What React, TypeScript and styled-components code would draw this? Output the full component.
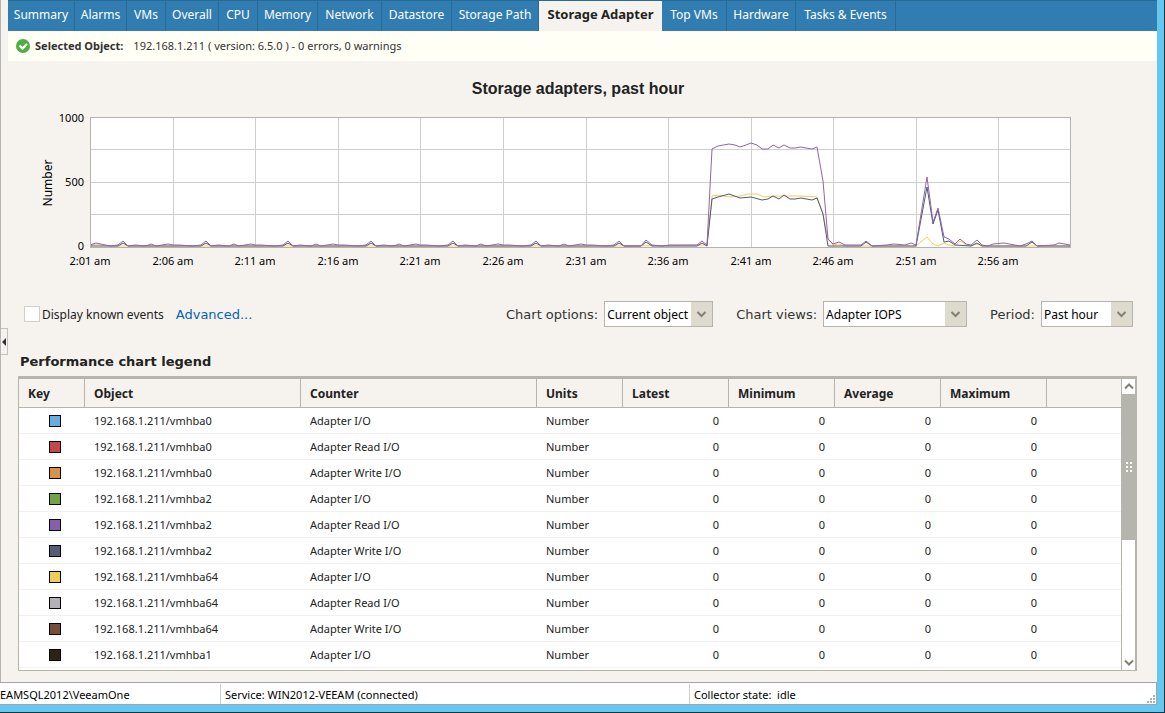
import React from "react";
import styled, { createGlobalStyle } from "styled-components";

const ui = `"Noto Sans", "Open Sans", sans-serif`;
const wide = `"DejaVu Sans", sans-serif`;
const line = "#b5b5ad";

const GlobalStyle = createGlobalStyle`
  * { box-sizing: border-box; }
  body { margin: 0; background: #63c9f0; font-family: ${ui}; font-size: 12px; color: #222; }
`;

const Frame = styled.div`
  min-height: 100vh;
  display: flex;
  flex-direction: column;
  border-right: 1px solid #1d3440;
  border-bottom: 1px solid #1d3440;
  background: #63c9f0;
  padding: 0 7px 7px 0;
`;
const Body = styled.div`
  flex: 1;
  display: flex;
  background: #f6f3ee;
`;
const Gutter = styled.div`
  width: 8px;
  flex: none;
  border-left: 1px solid #b4b4b4;
  padding-top: 328px;
`;
const Collapse = styled.button`
  display: flex;
  align-items: center;
  justify-content: center;
  width: 7px;
  height: 27px;
  padding: 0;
  border: 1px solid #c4c1bb;
  border-left: 0;
  background: #f6f3ee;
`;
const Main = styled.main`
  flex: 1;
  min-width: 0;
  display: flex;
  flex-direction: column;
`;

const Tabs = styled.nav`
  display: flex;
  height: 31px;
  background: #317db1;
  border-top: 1px solid #276a94;
`;
const Tab = styled.a<{ $active?: boolean; $w: number }>`
  flex: 0 0 ${(p) => p.$w}px;
  text-align: center;
  line-height: 27px;
  white-space: nowrap;
  text-decoration: none;
  font-size: ${(p) => (p.$active ? 13 : 12)}px;
  font-weight: ${(p) => (p.$active ? 700 : 400)};
  color: ${(p) => (p.$active ? "#222" : "#fff")};
  background: ${(p) => (p.$active ? "#f6f3ee" : "transparent")};
  border-right: ${(p) => (p.$active ? "0" : "1px solid #276a94")};
`;

const Status = styled.div`
  display: flex;
  align-items: center;
  height: 30px;
  padding: 0 0 1px 7px;
  background: #fffff6;
  font-size: 11px;
  line-height: 14px;
  color: #333;
  svg { margin-right: 4px; }
  strong { margin-right: 10px; }
`;

const ChartTitle = styled.h1`
  margin: 18px 9px 0 0;
  text-align: center;
  font: 700 16px/20px "Liberation Sans", Arial, sans-serif;
  color: #222;
`;
const Chart = styled.svg`
  display: block;
  width: 100%;
  height: auto;
  text { font-family: ${ui}; font-size: 11px; fill: #000; }
  text.axis { font-size: 12px; }
`;

const Controls = styled.div`
  display: flex;
  align-items: center;
  padding: 0 24px 0 16px;
  height: 26px;
  margin-top: 22px;
`;
const Check = styled.label`
  display: flex;
  align-items: center;
  gap: 2px;
  white-space: nowrap;
  input {
    appearance: none;
    width: 16px;
    height: 16px;
    margin: 0;
    background: #fff;
    border: 1px solid #d2d0cc;
  }
`;
const Advanced = styled.a`
  margin-left: 12px;
  margin-right: auto;
  font-family: ${wide};
  font-size: 13px;
  color: #0066b3;
  text-decoration: none;
`;
const Picker = styled.label`
  display: flex;
  align-items: center;
  gap: 6px;
  margin-left: 23px;
  font-family: ${wide};
  font-size: 13px;
  color: #333;
  white-space: nowrap;
`;
const SelectBox = styled.span<{ $w: number }>`
  display: flex;
  position: relative;
  width: ${(p) => p.$w}px;
  height: 26px;
  svg { position: absolute; right: 1px; top: 1px; pointer-events: none; }
`;
const Select = styled.select`
  appearance: none;
  width: 100%;
  padding: 0 0 0 2px;
  border: 1px solid ${line};
  border-radius: 0;
  background: #fff;
  color: #000;
  font-family: ${ui};
  font-size: 12px;
`;

const LegendTitle = styled.h2`
  margin: 25px 0 4px 12px;
  font: 700 13px/20px ${wide};
  color: #222;
`;
const Legend = styled.div`
  display: flex;
  margin: 0 20px 11px 10px;
  border: 1px solid ${line};
  border-top-width: 3px;
  border-right-width: 2px;
  background: #fff;
`;
const TableView = styled.div`
  flex: 1;
  padding-bottom: 2px;
  min-width: 0;
`;
const Table = styled.table`
  width: 100%;
  table-layout: fixed;
  border-collapse: separate;
  border-spacing: 0;
  font-size: 11px;
`;
const Th = styled.th`
  height: 29px;
  padding: 2px 0 0 9px;
  text-align: left;
  font: 700 12px/16px ${ui};
  background: #f6f3ee;
  border-bottom: 1px solid ${line};
  border-right: 1px solid ${line};
  &:last-child { border-right: 0; }
`;
const Td = styled.td<{ $num?: boolean }>`
  height: 26px;
  padding: 0 10px 0 9px;
  line-height: 16px;
  text-align: ${(p) => (p.$num ? "right" : "left")};
  white-space: nowrap;
  border-bottom: 1px solid #f1f1f1;
`;
const Swatch = styled.span<{ $color: string }>`
  display: block;
  width: 12px;
  height: 12px;
  margin-left: 21px;
  border: 1px solid #000;
  background: ${(p) => p.$color};
`;
const Scroll = styled.div`
  width: 14px;
  flex: none;
  display: flex;
  flex-direction: column;
  justify-content: space-between;
  border-left: 1px solid ${line};
  svg { display: block; }
`;
const ScrollButton = styled.button`
  display: flex;
  align-items: center;
  justify-content: center;
  height: 15px;
  padding: 0;
  border: 0;
  background: #fff;
`;
const Thumb = styled.div`
  height: 146px;
  margin-bottom: auto;
  display: flex;
  align-items: center;
  justify-content: center;
  background: ${line};
`;

const StatusBar = styled.footer`
  position: relative;
  display: flex;
  height: 23px;
  background: #fff;
  border: 1px solid #a5a3a8;
  border-left: 0;
  line-height: 22px;
  font-size: 11px;
  color: #000;
  overflow: hidden;
  white-space: pre;
`;
const StatusCell = styled.div<{ $w?: number }>`
  flex: ${(p) => (p.$w ? `0 0 ${p.$w}px` : "1")};
  padding-left: 4px;
  margin-top: 1px;
  & + & { border-left: 1px solid #d0d0d0; }
  &:first-child { padding-left: 0; }
`;
const Grip = styled.svg`
  position: absolute;
  right: 1px;
  bottom: 1px;
`;

const tabs: [string, number][] = [
  ["Summary", 67], ["Alarms", 52], ["VMs", 39], ["Overall", 53], ["CPU", 39], ["Memory", 60],
  ["Network", 64], ["Datastore", 70], ["Storage Path", 87], ["Storage Adapter", 123],
  ["Top VMs", 65], ["Hardware", 69], ["Tasks & Events", 100],
];

const rows: [string, string, string][] = [
  ["#66afe0", "vmhba0", "Adapter I/O"],
  ["#c4474e", "vmhba0", "Adapter Read I/O"],
  ["#d8934a", "vmhba0", "Adapter Write I/O"],
  ["#73a349", "vmhba2", "Adapter I/O"],
  ["#8660a9", "vmhba2", "Adapter Read I/O"],
  ["#555c78", "vmhba2", "Adapter Write I/O"],
  ["#efcd59", "vmhba64", "Adapter I/O"],
  ["#b3b1b5", "vmhba64", "Adapter Read I/O"],
  ["#754d39", "vmhba64", "Adapter Write I/O"],
  ["#2a2413", "vmhba1", "Adapter I/O"],
];

/* Plot area inside the chart's own coordinates: 980 x 130. */
const left = 82;
const top = 18;
const times = ["2:01", "2:06", "2:11", "2:16", "2:21", "2:26", "2:31", "2:36", "2:41", "2:46", "2:51", "2:56"];
const gridX = [0, 83, 165, 248, 330, 413, 496, 578, 661, 743, 826, 908];

type Point = [number, number];

/* Quiet traffic repeats every five minutes, with a bump at the third minute. */
const quiet: Point[] = gridX.slice(0, 7).flatMap((x, i): Point[] => [
  [x, 128], [x + 6, i ? 128 : 126], [x + 20, 129], [x + 28, 128], [x + 33, 124], [x + 38, 129],
  [x + 45, 128], [x + 56, 129], [x + 61, 127], [x + 66, 129], [x + 78, 127],
]).slice(0, 72);
const quietSlim = quiet.map(([x, y]): Point => [x, y === 124 ? 126 : 129]);
const quietFlat = quiet.map(([x, y]): Point => [x, y === 126 ? 127 : 129]);

const purple: Point[] = [
  ...quiet, [551, 129], [556, 123], [562, 128], [572, 129], [580, 128], [607, 128], [612, 124], [617, 128],
  [622, 32], [628, 29], [639, 27], [645, 28], [650, 30], [656, 28], [661, 26], [667, 28], [672, 32], [678, 32],
  [683, 28], [689, 31], [694, 28], [700, 31], [705, 31], [711, 30], [716, 31], [722, 32], [727, 30], [733, 64],
  [738, 122], [743, 127], [749, 125], [755, 128], [771, 128], [776, 124], [782, 129], [797, 128], [804, 127],
  [815, 128], [821, 126], [826, 128], [837, 60], [843, 105], [848, 91], [854, 120], [859, 122], [865, 127],
  [870, 122], [876, 127], [881, 128], [887, 123], [892, 128], [898, 129], [903, 127], [914, 126], [930, 129],
  [936, 127], [942, 124], [947, 129], [964, 128], [969, 126], [980, 128],
];
const navy: Point[] = [
  ...quietSlim, [551, 129], [556, 125], [562, 129], [607, 129], [612, 126], [617, 129],
  [622, 82], [628, 80], [639, 77], [650, 81], [661, 80], [672, 83], [678, 82], [683, 79], [689, 82], [694, 78],
  [700, 82], [705, 82], [711, 81], [722, 83], [727, 81], [733, 97], [738, 129], [771, 129], [776, 125], [782, 129],
  [826, 129], [837, 70], [843, 107], [848, 93], [854, 125], [859, 124], [865, 128], [881, 129], [887, 126],
  [892, 129], [936, 129], [942, 125], [947, 129], [980, 129],
];
const yellow: Point[] = [
  ...quietFlat, [617, 128], [622, 79], [628, 78], [639, 80], [650, 79], [658, 77], [667, 77],
  [674, 80], [683, 79], [694, 79], [711, 79], [727, 80], [733, 97], [738, 122], [743, 128], [749, 127], [755, 129],
  [826, 129], [837, 120], [843, 127], [848, 129], [854, 126], [859, 128], [865, 129], [870, 124], [876, 128],
  [881, 129], [887, 127], [892, 129], [980, 129],
];
const series: [string, Point[]][] = [["#f5ce5a", yellow], ["#4f5876", navy], ["#8d66ad", purple]];

function AdapterChart() {
  return (
    <Chart viewBox="0 0 1149 180" role="img" aria-label="Storage adapters, past hour">
      <g transform={`translate(${left} ${top})`}>
        <rect width="980" height="130" fill="#fff" />
        <g stroke="#cfcfcf" shapeRendering="crispEdges">
          {gridX.slice(1).map((x) => <line key={x} x1={x} x2={x} y1="0" y2="130" />)}
          {[32, 65, 97].map((y) => <line key={y} x1="0" x2="980" y1={y} y2={y} />)}
        </g>
        {series.map(([color, pts]) => (
          <polyline key={color} points={pts.map((p) => p.join(",")).join(" ")} fill="none" stroke={color} strokeWidth="1" />
        ))}
        <rect width="980" height="130" fill="none" stroke="#b3b3b3" shapeRendering="crispEdges" />
        <text x="-6" y="5" textAnchor="end">1000</text>
        <text x="-6" y="69" textAnchor="end">500</text>
        <text x="-6" y="133" textAnchor="end">0</text>
        {times.map((t, i) => <text key={t} x={gridX[i]} y="148" textAnchor="middle">{t} am</text>)}
        <text className="axis" transform="translate(-38 66) rotate(-90)" textAnchor="middle">Number</text>
      </g>
    </Chart>
  );
}

function Dropdown({ label, value, width }: { label: string; value: string; width: number }) {
  return (
    <Picker>
      {label}
      <SelectBox $w={width}>
        <Select defaultValue={value}><option>{value}</option></Select>
        <svg width="21" height="24" viewBox="0 0 21 24" aria-hidden="true">
          <rect width="21" height="24" fill="#dedacd" />
          <path d="M6.5 10l4 4 4-4" fill="none" stroke="#85816f" strokeWidth="2" />
        </svg>
      </SelectBox>
    </Picker>
  );
}

export default function App() {
  return (
    <Frame>
      <GlobalStyle />
      <Body>
        <Gutter>
          <Collapse aria-label="Collapse panel">
            <svg width="4" height="8" viewBox="0 0 4 8"><path d="M4 0v8L0 4z" fill="#333" /></svg>
          </Collapse>
        </Gutter>
        <Main>
          <Tabs>
            {tabs.map(([name, w]) => (
              <Tab key={name} href="#" $w={w} $active={name === "Storage Adapter"}>{name}</Tab>
            ))}
          </Tabs>
          <Status>
            <svg width="16" height="16" viewBox="0 0 16 16" aria-hidden="true">
              <circle cx="8" cy="8" r="7" fill="#4caf3f" />
              <path d="M4.5 7.5l3 3 4.5-4.5" fill="none" stroke="#fff" strokeWidth="2.4" />
            </svg>
            <strong>Selected Object:</strong>
            <span>192.168.1.211 ( version: 6.5.0 ) - 0 errors, 0 warnings</span>
          </Status>
          <ChartTitle>Storage adapters, past hour</ChartTitle>
          <AdapterChart />
          <Controls>
            <Check><input type="checkbox" />Display known events</Check>
            <Advanced href="#">Advanced...</Advanced>
            <Dropdown label="Chart options:" value="Current object" width={109} />
            <Dropdown label="Chart views:" value="Adapter IOPS" width={144} />
            <Dropdown label="Period:" value="Past hour" width={92} />
          </Controls>
          <LegendTitle>Performance chart legend</LegendTitle>
          <Legend>
            <TableView>
              <Table>
                <colgroup>
                  {[66, 216, 236, 86, 106, 106, 106, 106].map((w, i) => <col key={i} width={w} />)}
                  <col />
                </colgroup>
                <thead>
                  <tr>
                    {["Key", "Object", "Counter", "Units", "Latest", "Minimum", "Average", "Maximum", ""].map((h) => (
                      <Th key={h} scope="col">{h}</Th>
                    ))}
                  </tr>
                </thead>
                <tbody>
                  {rows.map(([color, adapter, counter]) => (
                    <tr key={color}>
                      <Td><Swatch $color={color} /></Td>
                      <Td>192.168.1.211/{adapter}</Td>
                      <Td>{counter}</Td>
                      <Td>Number</Td>
                      <Td $num>0</Td>
                      <Td $num>0</Td>
                      <Td $num>0</Td>
                      <Td $num>0</Td>
                      <Td />
                    </tr>
                  ))}
                </tbody>
              </Table>
            </TableView>
            <Scroll>
              <ScrollButton aria-label="Scroll up">
                <svg width="10" height="7" viewBox="0 0 10 7"><path d="M1 5.5l4-4 4 4" fill="none" stroke="#85816f" strokeWidth="2" /></svg>
              </ScrollButton>
              <Thumb>
                <svg width="6" height="10" viewBox="0 0 6 10" fill="#fff">
                  {[0, 4, 8].map((y) => <g key={y}><rect y={y} width="2" height="2" /><rect x="4" y={y} width="2" height="2" /></g>)}
                </svg>
              </Thumb>
              <ScrollButton aria-label="Scroll down">
                <svg width="10" height="7" viewBox="0 0 10 7"><path d="M1 1.5l4 4 4-4" fill="none" stroke="#85816f" strokeWidth="2" /></svg>
              </ScrollButton>
            </Scroll>
          </Legend>
        </Main>
      </Body>
      <StatusBar>
        <StatusCell $w={220}>EAMSQL2012\VeeamOne</StatusCell>
        <StatusCell $w={469}>Service: WIN2012-VEEAM (connected)</StatusCell>
        <StatusCell>{"Collector state:  idle"}</StatusCell>
        <Grip width="8" height="8" viewBox="0 0 8 8" fill="#b0b0b0" aria-hidden="true">
          <path d="M6 0h2v2h-2zM3 3h2v2h-2zM6 3h2v2h-2zM0 6h2v2h-2zM3 6h2v2h-2zM6 6h2v2h-2z" />
        </Grip>
      </StatusBar>
    </Frame>
  );
}
